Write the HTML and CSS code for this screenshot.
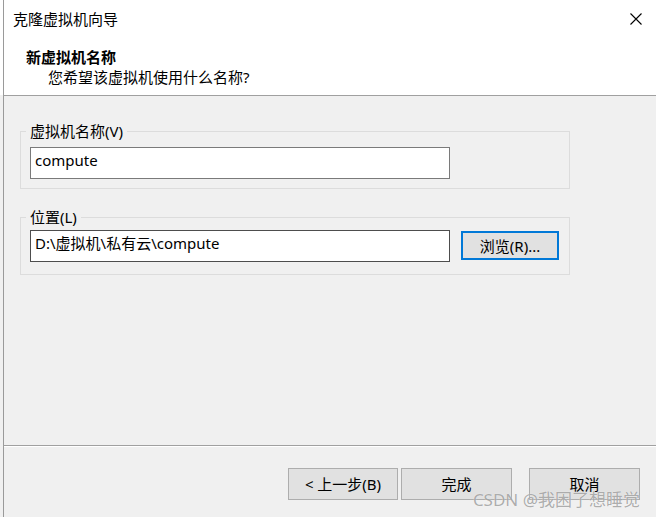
FILE: index.html
```html
<!DOCTYPE html>
<html lang="zh">
<head>
<meta charset="utf-8">
<title>克隆虚拟机向导</title>
<link rel="stylesheet" href="styles.css">
</head>
<body>
<div class="window">
  <div class="titlebar">
    <span class="title">克隆虚拟机向导</span>
    <svg class="close" width="12" height="12" viewBox="0 0 12 12"><path d="M0.5 0.5 L11.5 11.5 M11.5 0.5 L0.5 11.5" stroke="#000" stroke-width="1.1" fill="none"/></svg>
  </div>
  <div class="header">
    <div class="h-title">新虚拟机名称</div>
    <div class="h-sub">您希望该虚拟机使用什么名称?</div>
  </div>
  <div class="content">
    <fieldset class="group g1">
      <legend>虚拟机名称(V)</legend>
      <div class="field">compute</div>
    </fieldset>
    <fieldset class="group g2">
      <legend>位置(L)</legend>
      <div class="row">
        <div class="field dark">D:\虚拟机\私有云\compute</div>
        <div class="btn browse">浏览(R)...</div>
      </div>
    </fieldset>
  </div>
  <div class="footer">
    <div class="btn wide">&lt; 上一步(B)</div>
    <div class="btn wide finish">完成</div>
    <div class="btn wide cancel">取消</div>
  </div>
  <div class="watermark">CSDN @我困了想睡觉</div>
</div>
</body>
</html>
```

FILE: styles.css
```css
html, body {
  margin: 0;
  padding: 0;
}
body {
  font-family: "Noto Sans", "Noto Sans CJK SC", sans-serif;
  font-size: 15px;
  color: #000;
}
.window {
  position: relative;
  width: 656px;
  height: 517px;
  overflow: hidden;
  display: flex;
  flex-direction: column;
  background: linear-gradient(to bottom, #fff 0, #fff 95px, #f0f0f0 95px);
}
.titlebar, .header, .content, .footer {
  margin-left: 3px;
  border-left: 1px solid #9a9a9a;
}
.titlebar {
  height: 38px;
  background: #fff;
  display: flex;
  align-items: center;
  justify-content: space-between;
  padding-left: 9px;
  padding-right: 14px;
  line-height: 20px;
}
.close {
  display: block;
}
.header {
  box-sizing: border-box;
  height: 58px;
  background: #fff;
  border-bottom: 1px solid #a0a0a0;
  padding: 9px 0 0 22px;
  line-height: 20px;
}
.h-title {
  font-weight: 700;
}
.h-sub {
  padding-left: 22px;
}
.content {
  flex: 1;
  background: #f0f0f0;
  padding-top: 25px;
}
.group {
  margin: 0 0 0 16px;
  width: 550px;
  box-sizing: border-box;
  border: 1px solid #dcdcdc;
  padding: 6px 9px 9px 9px;
  min-width: 0;
}
.group legend {
  padding: 0 4px;
  margin-left: -4px;
  line-height: 20px;
}
.g2 {
  margin-top: 18px;
  padding-top: 3px;
  padding-bottom: 12px;
}
.field {
  box-sizing: border-box;
  width: 420px;
  height: 32px;
  border: 1px solid #7a7a7a;
  background: #fff;
  padding: 2px 0 0 4px;
  line-height: 20px;
  white-space: nowrap;
}
.field.dark {
  border-color: #4d4d4d;
}
.row {
  display: flex;
  align-items: flex-start;
}
.btn {
  box-sizing: border-box;
  background: #e1e1e1;
  border: 1px solid #adadad;
  display: flex;
  align-items: center;
  justify-content: center;
  line-height: 20px;
  white-space: nowrap;
}
.browse {
  width: 98px;
  height: 29px;
  margin: 1px 0 0 11px;
  border: 2px solid #0078d7;
  padding-top: 1px;
}
.footer {
  height: 72px;
  box-sizing: border-box;
  background: #f0f0f0;
  border-top: 1px solid #a0a0a0;
  box-shadow: inset 0 1px 0 #fff;
  padding: 22px 16px 0 0;
  display: flex;
  justify-content: flex-end;
  align-items: flex-start;
}
.wide {
  width: 111px;
  height: 32px;
}
.wide:first-child {
  width: 110px;
}
.finish {
  margin-left: 3px;
}
.cancel {
  margin-left: 17px;
}
.watermark {
  position: absolute;
  right: 16px;
  top: 488px;
  font-size: 17px;
  line-height: 24px;
  color: rgba(105, 105, 105, 0.55);
  text-shadow: 0 0 1px rgba(255, 255, 255, 0.9);
  white-space: nowrap;
}
```
